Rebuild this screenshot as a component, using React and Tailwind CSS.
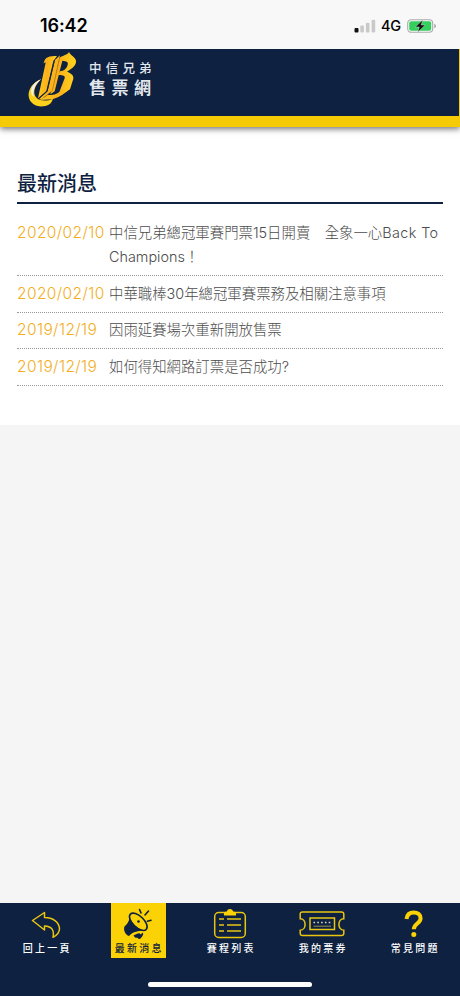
import React from "react";

const news = [
  {
    date: "2020/02/10",
    title: (
      <>
        中信兄弟總冠軍賽門票15日開賣　全象一心
        <span className="tracking-[0.4px]">Back To</span> Champions！
      </>
    ),
  },
  { date: "2020/02/10", title: "中華職棒30年總冠軍賽票務及相關注意事項" },
  { date: "2019/12/19", title: "因雨延賽場次重新開放售票" },
  { date: "2019/12/19", title: "如何得知網路訂票是否成功?" },
];

const BackIcon = () => (
  <svg viewBox="0 0 30 28" className="w-[30px] h-7" fill="none" stroke="#e9c50f" strokeWidth="1.5" strokeLinejoin="round">
    <path d="M1.500 10.500 13.500 2.500V7.500C22 7.500 28 12 28.500 18.500 28.500 22 26.500 25 22 27.300 23.500 20 21 16.500 13.500 16V20Z" />
  </svg>
);

const MegaphoneIcon = () => (
  <svg viewBox="0 0 30 32" className="w-[30px] h-8" fill="none" stroke="#0e2140" strokeWidth="1.6" strokeLinecap="round">
    <ellipse cx="15.300" cy="13.800" rx="11" ry="5.600" transform="rotate(44 15.300 13.800)" />
    <path d="M6.800 9.500C6 13.500 4 16.500 1.500 18.500c-1.400 3.500.8 8.300 4.500 9.500C8.500 25 12.500 23 20 22.500 14 20 8.500 15 6.800 9.500Z" fill="#0e2140" stroke="none" />
    <path d="M10.500 27.500c2-1.200 4-2 6-2.200l1.300 1.300 1.700-1.800c1.700.5 0 4.200-2 5.700-1.200.8-2 .5-3-.8-1.500.3-3 0-4-2.200Z" fill="#0e2140" stroke="none" />
    <circle cx="15.500" cy="13.500" r="1.300" fill="#0e2140" stroke="none" />
    <path d="M16.500 1.500l1.500 3.300M25.500 3l-3.500 4M28 12.200l-3.500 1" />
  </svg>
);

const ScheduleIcon = () => (
  <svg viewBox="0 0 34 32" className="w-[34px] h-8" fill="none" stroke="#e9c50f" strokeWidth="1.5">
    <rect x="1.700" y="4.500" width="30.600" height="25" rx="4" />
    <path d="M11 7.500C10.500 5 11.500 3.500 14 3.500 14.500 0.300 19.500 0.300 20 3.500 22.500 3.500 23.500 5 23 7.500Z" fill="#fbd206" stroke="none" />
    <path d="M6 11h5M14 11h14M6 17h5M14 17h14M6 23h5M14 23h14" />
  </svg>
);

const TicketIcon = () => (
  <svg viewBox="0 0 46 26" className="w-[46px] h-[26px]" fill="none" stroke="#e9c50f" strokeWidth="1.500">
    <path d="M3.500 1h39c1.500 0 2.300.8 2.300 2.200v4.500c-6.500 0-6.500 11.500 0 11.500v3c0 1.600-.8 2.300-2.300 2.300h-39c-1.500 0-2.300-.7-2.300-2.300v-3c6.500 0 6.500-11.500 0-11.500V3.200C1.200 1.800 2 1 3.500 1Z" />
    <rect x="11" y="7" width="24.500" height="11.500" />
    <path d="M14.500 11.500h18" stroke="#d8d8c8" strokeWidth="1.600" strokeDasharray="1.600 2.200" />
    <path d="M14.500 15.200h17.500" stroke="#9b914f" strokeWidth="1" />
  </svg>
);

const QuestionIcon = () => (
  <svg viewBox="0 0 20 28" className="w-5 h-7" fill="none" stroke="#fbd206" strokeWidth="4">
    <path d="M2.500 9C3 4.500 6 2.400 9.700 2.400c4.300 0 6.900 2.400 6.900 5.800 0 5.300-6.800 5.300-6.800 11" />
    <circle cx="9.800" cy="24.600" r="2.500" fill="#fbd206" stroke="none" />
  </svg>
);

const tabs = [
  { label: "回上一頁", icon: <BackIcon /> },
  { label: "最新消息", icon: <MegaphoneIcon />, active: true },
  { label: "賽程列表", icon: <ScheduleIcon /> },
  { label: "我的票券", icon: <TicketIcon /> },
  { label: "常見問題", icon: <QuestionIcon /> },
];

const Logo = () => (
  <svg viewBox="0 0 180 186" className="w-[60px] h-[62px]">
    <defs>
      <linearGradient id="gold" x1="0" y1="0" x2="1" y2="0">
        <stop offset="0" stopColor="#fdc71a" />
        <stop offset=".5" stopColor="#fbb01b" />
        <stop offset="1" stopColor="#ffd51c" />
      </linearGradient>
    </defs>
    {/* swoosh */}
    <path d="M51 91C26 100 12 122 14 142c3 24 27 34 50 29 13-3 20-11 23-22-20 9-44 8-53-7-8-14-1-33 17-51Z" fill="#fbd11b" />
    <path d="M51 91C33 99 22 111 21 126c0 8 3 14 8 17-4-16 3-35 22-52Z" fill="#eef1f5" />
    {/* double stem */}
    <path d="M59 45C60 28 71 19 99 21L88 36 67 126 42 148 65 41C62 40 60 42 59 45Z" fill="url(#gold)" />
    <path d="M93 33 108 19 84 126 52 151 44 150 71 127Z" fill="#fbb21b" />
    {/* bowls */}
    <path d="M106 27C117 18 130 19 135 9 138 19 158 25 156 39 154 53 140 61 129 68 141 73 149 77 148 89L138 121C123 131 110 144 85 151L48 153 70 137C84 140 96 137 106 129L122 88C124 80 118 79 104 77L108 67C119 65 128 60 131 47 134 39 128 36 115 35L92 127 79 136Z" fill="url(#gold)" />
    <path d="M91 34 69 127 44 150" fill="none" stroke="#152540" strokeWidth="2.500" />
    <path d="M107 27 85 125 60 146" fill="none" stroke="#7a5716" strokeWidth="1.500" />
  </svg>
);

const StatusBar = () => (
  <div className="z-20 flex h-[49px] shrink-0 items-start justify-between bg-[#f8f8f8] pl-10 pr-[23px] pt-4 text-black">
    <span className="text-[18px] leading-5 font-semibold tracking-[-0.1px]">16:42</span>
    <div className="flex h-5 items-center">
      <svg viewBox="0 0 22 14" className="mr-[5px] h-3.5 w-[22px]">
        <rect x="0.500" y="9" width="4" height="4.500" rx="1" fill="#111" />
        <rect x="6.300" y="6.500" width="3.600" height="7" rx="1" fill="#c9c9c9" />
        <rect x="11.900" y="3.800" width="3.600" height="9.700" rx="1" fill="#c9c9c9" />
        <rect x="17.600" y="0.800" width="3.600" height="12.700" rx="1" fill="#c9c9c9" />
      </svg>
      <span className="w-5 text-[14.5px] font-medium tracking-[-0.2px]">4G</span>
      <svg viewBox="0 0 30 14" className="ml-1.5 h-3.5 w-[30px]">
        <rect x="0.700" y="0.700" width="25" height="12.600" rx="3.500" fill="none" stroke="#a9aaa9" strokeWidth="1.100" />
        <rect x="2.200" y="2.200" width="22" height="9.600" rx="2" fill="#35cf5d" />
        <path d="M27.400 4.800c2 .8 2 3.600 0 4.400Z" fill="#999" />
        <path d="M15.800 0.800 8.300 8H12.300L10.800 13.200 18.200 6H14.200Z" fill="#111" stroke="#e8f8ec" strokeWidth=".4" />
      </svg>
    </div>
  </div>
);

const App = () => {
  return (
    <div className="flex h-[996px] w-[460px] flex-col overflow-hidden bg-[#f5f5f5] font-['Inter','Noto_Sans_CJK_TC',sans-serif]">
      <StatusBar />

      <header className="z-10 h-[78px] shrink-0 bg-[#f5cb05] pr-px pb-[11px] shadow-[0_2px_6px_rgba(0,0,0,0.55)]">
        <div className="flex h-[67px] bg-[#0e2140] pl-6">
          <Logo />
          <div className="ml-[5px] flex flex-col pt-[9px] font-['Noto_Sans_CJK_TC',sans-serif] text-[#e3e8ee]">
            <span className="text-[12.500px] leading-[19px] font-medium tracking-[4.200px]">中信兄弟</span>
            <span className="text-[17px] leading-[19px] font-bold tracking-[5.500px]">售票網</span>
          </div>
        </div>
      </header>

      <main className="h-[298px] shrink-0 bg-white px-[17px] pt-[43px]">
        <h1 className="h-[34px] border-b-2 border-[#0e2140] text-[20px] leading-7 font-medium text-[#0e2140]">
          最新消息
        </h1>
        <ul className="pt-[11px]">
          {news.map((item, index) => (
            <li
              key={index}
              className="flex border-b border-dotted border-[#999] py-[5.700px] leading-[24.300px]"
            >
              <span className="w-[92px] shrink-0 text-[15.500px] font-light tracking-[0.400px] text-[#f2ae1c]">
                {item.date}
              </span>
              <span className="text-[14.400px] font-light text-[#4c4c4c]">{item.title}</span>
            </li>
          ))}
        </ul>
      </main>

      <nav className="mt-auto flex h-[93px] shrink-0 flex-col items-center justify-between bg-[#0e2140] pb-[9px]">
        <div className="flex w-full">
          {tabs.map((tab) => (
            <div key={tab.label} className="flex flex-1 justify-center">
              <div
                className={`flex h-[55px] w-[55px] flex-col items-center ${
                  tab.active ? "bg-[#fbd206] text-[#0e2140]" : "text-white"
                }`}
              >
                <div className="flex h-[38px] items-center pt-[3px]">{tab.icon}</div>
                <span className="pl-[2.500px] font-['Noto_Sans_CJK_TC',sans-serif] text-[10px] leading-[14px] font-medium tracking-[2.300px] whitespace-nowrap">
                  {tab.label}
                </span>
              </div>
            </div>
          ))}
        </div>
        <div className="h-[5px] w-[164px] rounded-full bg-white" />
      </nav>
    </div>
  );
};

export default App;
